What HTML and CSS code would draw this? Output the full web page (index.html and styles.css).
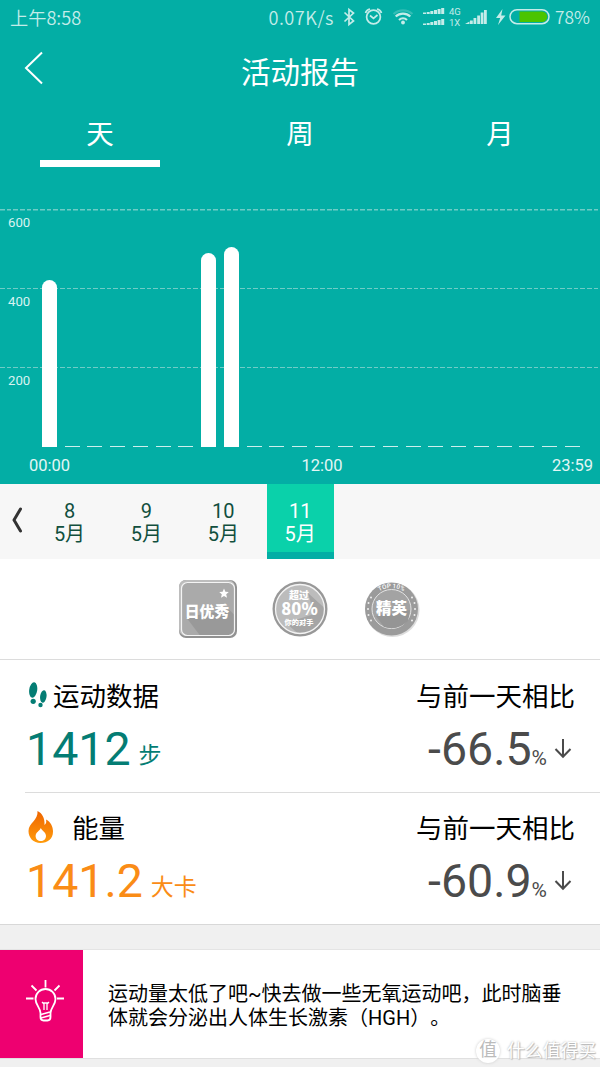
FILE: index.html
```html
<!DOCTYPE html>
<html lang="zh-CN">
<head>
    <meta charset="UTF-8">
    <meta name="viewport" content="width=device-width, initial-scale=1.0">
    <title>活动报告</title>
    <link rel="stylesheet" href="styles.css">
</head>
<body>

    <header class="header">
        <div class="status-bar">
            <span class="clock">上午8:58</span>
            <span class="speed">0.07K/s</span>
            <svg class="status-icons" width="226" height="34" viewBox="0 0 226 34">
                <g fill="none" stroke="#c4ece9" stroke-width="1.7">
                    <path d="M10.500 12.500l9 8.500-4.500 3.500V9.500l4.500 3.500-9 8.500"/>
                    <circle cx="39.500" cy="17" r="6.900"/>
                    <path d="M36 15.500l3.500 3 4-3.500"/>
                    <path d="M31.500 13a6 6 0 0 1 4.500-4M47.500 13a6 6 0 0 0-4.500-4"/>
                </g>
                <g fill="none" stroke="#c4ece9" stroke-width="2.200">
                    <path d="M59.500 14a14 14 0 0 1 19 0" opacity=".25"/>
                    <path d="M61.700 16.500a10.500 10.500 0 0 1 14.600 0"/>
                    <path d="M65 20a6 6 0 0 1 8 0"/>
                </g>
                <circle cx="69" cy="22.500" r="1.900" fill="#c4ece9"/>
                <g fill="#c4ece9">
                    <path d="M89 12.500h3v1.500h-3zM92.700 12h3v2h-3zM96.300 11h3v3h-3zM100 10h3v4h-3zM103.600 9h3v5h-3zM107.200 8h3v6h-3z"/>
                    <path d="M89 23.500h3V25h-3zM92.700 23h3v2h-3zM96.300 22h3v3h-3zM100 21h3v4h-3zM103.600 20h3v5h-3zM107.200 19h3v6h-3z"/>
                    <path d="M131 24l4.500-2.500V24zM136 20.500h2.800V24H136zM139.500 18h2.800v6h-2.800zM143.200 15.500h2.800V24h-2.800zM146.700 12.500h2.800V24h-2.800zM150 10h2.800v14H150z"/>
                    <path d="M168.500 9l-6.500 9h4.200l-2.200 7 7.500-9.500h-4.300z"/>
                    <text x="115" y="15" font-size="9.500">4G</text>
                    <text x="115" y="26" font-size="9.500">1X</text>
                </g>
                <rect x="176" y="9.700" width="39" height="14" rx="7" fill="none" stroke="#c4ece9" stroke-width="1.500"/>
                <path d="M185.500 11.500H208a5.200 5.200 0 0 1 0 10.400h-22.500z" fill="#4bc400"/>
            </svg>
            <span class="battery">78%</span>
        </div>

        <div class="title-bar">
            <svg class="back" width="20" height="34" viewBox="0 0 20 34">
                <path d="M18 1.500L2 17l16 15.500" fill="none" stroke="#fff" stroke-width="2"/>
            </svg>
            <h1>活动报告</h1>
        </div>

        <nav class="tabs">
            <a class="tab active">天</a>
            <a class="tab">周</a>
            <a class="tab">月</a>
        </nav>

        <div class="chart">
            <div class="grid-lines">
                <div class="line">600</div>
                <div class="line">400</div>
                <div class="line">200</div>
            </div>
            <div class="bars" id="bars"></div>
        </div>
        <div class="hours">
            <span>00:00</span>
            <span class="noon">12:00</span>
            <span>23:59</span>
        </div>
    </header>

    <div class="dates">
        <svg class="prev" width="10" height="26" viewBox="0 0 10 26">
            <path d="M8.500 2L2 13l6.500 11" fill="none" stroke="#333" stroke-width="3" stroke-linecap="round" stroke-linejoin="round"/>
        </svg>
        <div class="date">8<br>5月</div>
        <div class="date">9<br>5月</div>
        <div class="date">10<br>5月</div>
        <div class="date selected">11<br>5月</div>
    </div>

    <div class="badges">
        <svg class="square" width="60" height="60" viewBox="0 0 60 60">
            <rect x="1" y="1" width="58" height="58" rx="7" fill="#919191"/>
            <rect x="1" y="1" width="56" height="56" rx="7" fill="#bdbdbd"/>
            <rect x="3.500" y="3.500" width="53" height="53" rx="6" fill="#aaa"/>
            <path d="M8 38l14 18.500h28q6.500 0 6.500-7V36l-5-5z" fill="#999"/>
            <rect x="3.500" y="3.500" width="53" height="53" rx="6" fill="none" stroke="#f4f4f4" stroke-width="1.200"/>
            <path d="M46 9.500l1.400 3.200 3.400.3-2.600 2.300.8 3.400-3-1.800-3 1.800.8-3.400-2.600-2.300 3.400-.3z" fill="#fff"/>
            <text class="badge-text" x="29" y="37.500" font-size="14.800">日优秀</text>
        </svg>
        <svg width="56" height="56" viewBox="0 0 56 56">
            <circle cx="28" cy="28" r="27.500" fill="#989898"/>
            <circle cx="28" cy="28" r="24.500" fill="#bcbcbc"/>
            <path d="M36 12l16.500 15A24.500 24.500 0 0 1 26 52.400L14 42l28-9z" fill="#a5a5a5"/>
            <circle cx="28" cy="28" r="24.500" fill="none" stroke="#f4f4f4" stroke-width="1.300"/>
            <text class="badge-text" x="27" y="18" font-size="10">超过</text>
            <text class="badge-text" x="27.500" y="34" font-size="16.500">80%</text>
            <text class="badge-text" x="27" y="44" font-size="7.200">你的对手</text>
        </svg>
        <svg width="56" height="58" viewBox="0 0 56 58">
            <circle cx="28.500" cy="30" r="27" fill="#ddd"/>
            <circle cx="27.500" cy="29" r="26.500" fill="#9b9b9b"/>
            <circle cx="27.500" cy="29" r="19.500" fill="#a3a3a3" stroke="#e4e4e4"/>
            <path d="M12 36l8 11q14 4 24-6l2-11z" fill="#959595"/>
            <g fill="#f0f0f0">
                <circle cx="7" cy="17.500" r="1"/>
                <circle cx="4.500" cy="23" r="1"/>
                <circle cx="4" cy="29" r="1"/>
                <circle cx="4.500" cy="35" r="1"/>
                <circle cx="7" cy="40.500" r="1"/>
                <circle cx="48" cy="17.500" r="1"/>
                <circle cx="50.500" cy="23" r="1"/>
                <circle cx="51" cy="29" r="1"/>
                <circle cx="50.500" cy="35" r="1"/>
                <circle cx="48" cy="40.500" r="1"/>
            </g>
            <path id="arc" d="M5 29a22.500 21 0 0 1 45 0" fill="none"/>
            <text font-size="6.300" font-weight="500" fill="#fff" text-anchor="middle"><textPath href="#arc" startOffset="50%">TOP 10%</textPath></text>
            <text class="badge-text" x="27.500" y="34" font-size="15.500">精英</text>
        </svg>
    </div>

    <section class="data-row steps">
        <div class="data">
            <h2>
                <svg width="20" height="26" viewBox="0 0 20 26">
                    <g fill="#047d74">
                        <ellipse cx="5.200" cy="8" rx="4" ry="7.800" transform="rotate(8 5.200 8)"/>
                        <circle cx="5.200" cy="19.300" r="2.600"/>
                        <ellipse cx="15.300" cy="14.500" rx="3.200" ry="6.200" transform="rotate(8 15.300 14.500)"/>
                        <circle cx="12.500" cy="23" r="2.200"/>
                    </g>
                </svg>
                运动数据
            </h2>
            <p class="value">1412<span class="unit">步</span></p>
        </div>
        <div class="compare">
            <h2>与前一天相比</h2>
            <p class="value">-66.5<span class="percent">%</span><svg class="down" width="18" height="20" viewBox="0 0 18 20"><path d="M9 0v17.500M1.500 10L9 17.700 16.500 10" fill="none" stroke="#4b4b4b" stroke-width="2"/></svg></p>
        </div>
    </section>

    <section class="data-row energy">
        <div class="data">
            <h2>
                <svg width="26" height="33" viewBox="0 0 26 33">
                    <defs>
                        <linearGradient id="fire" x1="0" y1="0" x2="0" y2="1">
                            <stop offset="0" stop-color="#ee6500"/>
                            <stop offset="1" stop-color="#ff9b0c"/>
                        </linearGradient>
                    </defs>
                    <path d="M9.500 0C14 2 17 7 16.500 14 18.500 12.500 18.500 10.500 18 8.500 23 11 25 16 25 20.500 25 28 19.500 32 12.500 32S.5 27 .5 20C.5 12 10.500 9 9.500 0z" fill="url(#fire)"/>
                    <path d="M12.800 17C14 20 18 21 18 25c0 3-2.300 5-5.200 5s-5.200-2-5.200-5c0-4 4.200-5 5.200-8z" fill="#fff"/>
                </svg>
                能量
            </h2>
            <p class="value">141.2<span class="unit">大卡</span></p>
        </div>
        <div class="compare">
            <h2>与前一天相比</h2>
            <p class="value">-60.9<span class="percent">%</span><svg class="down" width="18" height="20" viewBox="0 0 18 20"><path d="M9 0v17.500M1.500 10L9 17.700 16.500 10" fill="none" stroke="#4b4b4b" stroke-width="2"/></svg></p>
        </div>
    </section>

    <section class="tip">
        <div class="tip-icon">
            <svg width="38" height="42" viewBox="0 0 38 42">
                <g fill="none" stroke="#fff" stroke-width="1.800">
                    <path d="M19.500 0v7.500M5.500 5.500l5 5M33.500 5.500l-5 5M0 18.500h7.500M31 18.500h7"/>
                    <path d="M14.500 33c0-5-5-8-5-14a10 10 0 0 1 20 0c0 6-5 9-5 14v4q0 3.500-3 3.500h-4q-3 0-3-3.500z"/>
                    <path d="M15 34.500l9-2.500M15 38l9-2.500M16 22l2 2v6M23 22l-2 2v6M16.500 23h6" stroke-width="1.300"/>
                </g>
            </svg>
        </div>
        <p>运动量太低了吧~快去做一些无氧运动吧，此时脑垂<br>体就会分泌出人体生长激素（HGH）。</p>
    </section>

    <div class="watermark"><span class="mark">值</span>什么值得买</div>

    <script>
        // 每小时步数
        const hours = [420, 0, 0, 0, 0, 0, 0, 490, 505, 0, 0, 0, 0, 0, 0, 0, 0, 0, 0, 0, 0, 0, 0, 0];

        let bars = '';
        for (const steps of hours) {
            bars += steps > 0
                ? `<div class="bar" style="height: ${steps / 600 * 238}px"></div>`
                : '<div class="bar empty"></div>';
        }
        document.getElementById('bars').innerHTML = bars;
    </script>

</body>
</html>
```

FILE: styles.css
```css
* {
    box-sizing: border-box;
}
body {
    margin: 0;
    height: 1067px;
    overflow: hidden;
    background-color: #f0f0f0;
    font-family: Roboto, "Noto Sans CJK SC", sans-serif;
    text-spacing-trim: space-all;
}
h1, h2, p {
    margin: 0;
    font-weight: normal;
}
svg {
    display: block;
    flex-shrink: 0;
}

/* header */
.header {
    height: 484px;
    background-color: #03aea5;
    color: #fff;
}
.status-bar {
    display: flex;
    align-items: center;
    height: 34px;
    padding: 0 10px;
    color: #c4ece9;
    font-family: "Noto Sans CJK SC", sans-serif;
    font-size: 18.2px;
}
.clock, .speed, .battery {
    margin-top: -1px;
    font-weight: 350;
}
.speed {
    margin-left: auto;
    letter-spacing: .5px;
}
.status-icons {
    margin-right: -5px;
    font-family: Roboto, sans-serif;
}
.battery {
    width: 35px;
    font-size: 17.4px;
}
.title-bar {
    display: grid;
    grid-template-columns: 60px 1fr 60px;
    align-items: center;
    height: 74px;
}
.back {
    margin: -6px 0 0 23.5px;
}
.title-bar h1 {
    margin-top: -3px;
    font-size: 29.5px;
    text-align: center;
}
.tabs {
    display: flex;
    height: 60px;
}
.tab {
    flex: 1;
    margin: 0 40px;
    height: 59px;
    border-bottom: 7px solid transparent;
    font-size: 27.5px;
    line-height: 54px;
    text-align: center;
}
.tab.active {
    border-color: #fff;
}

/* chart */
.chart {
    display: grid;
    height: 279px;
    padding-top: 41px;
}
.grid-lines, .bars {
    grid-area: 1 / 1;
}
.line {
    height: 79.2px;
    padding: 4px 8px;
    background: repeating-linear-gradient(to right, #6fccc6 0 4.7px, transparent 4.7px 6.67px) 0 0 / 100% 1.3px no-repeat;
    color: #d9f3f1;
    font-size: 13.2px;
    line-height: 19px;
}
.line:first-child {
    background-size: 100% 2px;
    background-position: 0 -.5px;
}
.bars {
    display: flex;
    align-items: flex-end;
    justify-content: space-between;
    height: 238px;
    padding: 0 20px 0 42px;
}
.bar {
    width: 15px;
    border-radius: 8px 8px 0 0;
    background-color: #fff;
}
.bar.empty {
    height: 1.5px;
    border-radius: 0;
    background-color: #cdefed;
}
.hours {
    display: flex;
    justify-content: space-between;
    padding: 9px 7px 0 29px;
    color: #e3f6f5;
    font-size: 16.5px;
    line-height: 20px;
}
.noon {
    margin-left: 22px;
}

/* dates */
.dates {
    display: flex;
    align-items: center;
    height: 75px;
    padding-left: 12px;
    background-color: #f7f7f7;
}
.prev {
    margin: -4px 14px 0 0;
}
.date {
    width: 67px;
    height: 75px;
    margin-right: 9.9px;
    padding-top: 15.5px;
    color: #114f3e;
    font-size: 20px;
    line-height: 23.7px;
    text-align: center;
}
.date.selected {
    border-bottom: 7px solid #03aea5;
    background-color: #0ad1aa;
    color: #fff;
}

/* badges */
.badges {
    display: flex;
    align-items: center;
    justify-content: center;
    gap: 36px;
    height: 100px;
    padding-right: 2px;
    background-color: #fff;
}
.square {
    margin-right: -2px;
}
.badge-text {
    fill: #fff;
    font-family: "Noto Sans CJK SC", sans-serif;
    font-weight: 900;
    text-anchor: middle;
}

/* data */
.data-row {
    display: flex;
    justify-content: space-between;
    height: 133px;
    padding: 0 25px;
    background-color: #fff;
}
.steps {
    border-top: 1px solid #dcdcdc;
}
.energy {
    background: linear-gradient(#dcdcdc, #dcdcdc) 25px 0 / 100% 1px no-repeat #fff;
    border-bottom: 1px solid #d8d8d8;
}
.data-row h2 {
    display: flex;
    align-items: center;
    gap: 5px;
    height: 68px;
    padding-left: 3px;
    color: #000;
    font-size: 26.5px;
}
.data-row h2 svg {
    margin-top: 2px;
}
.energy h2 {
    gap: 18px;
}
.value {
    display: flex;
    align-items: baseline;
    margin-top: -6px;
    padding-left: 1px;
    color: #047d74;
    font-size: 46.5px;
    line-height: 54px;
}
.energy .value {
    color: #fa8c16;
}
.unit {
    position: relative;
    top: -2px;
    margin-left: 8px;
    font-size: 23px;
}
.data-row .compare .value {
    color: #4b4b4b;
    justify-content: flex-end;
}
.percent {
    margin-right: 1px;
    font-size: 21px;
}
.down {
    align-self: center;
    margin: -10px 3px 0 6px;
}

/* tip */
.tip {
    display: flex;
    height: 110px;
    margin-top: 24px;
    border-top: 1px solid #e4e4e4;
    border-bottom: 1px solid #e0e0e0;
    background-color: #fff;
}
.tip-icon {
    display: flex;
    justify-content: center;
    width: 83px;
    padding: 30px 0 0 6px;
    background-color: #ee0070;
}
.tip p {
    padding: 33px 0 0 25px;
    color: #000;
    font-size: 20px;
    line-height: 23.5px;
    white-space: nowrap;
}
.watermark {
    position: absolute;
    right: 4px;
    bottom: 3px;
    display: flex;
    align-items: center;
    gap: 7px;
    color: #fff;
    font-size: 17.8px;
    line-height: 26px;
    text-shadow: 0 0 2px #aaa, 1px 1px 1px #bbb;
}
.mark {
    width: 24px;
    height: 24px;
    border-radius: 50%;
    background-color: #fff;
    box-shadow: 0 0 3px #ccc;
    color: #bbb;
    line-height: 22px;
    text-align: center;
    text-shadow: none;
}
```
